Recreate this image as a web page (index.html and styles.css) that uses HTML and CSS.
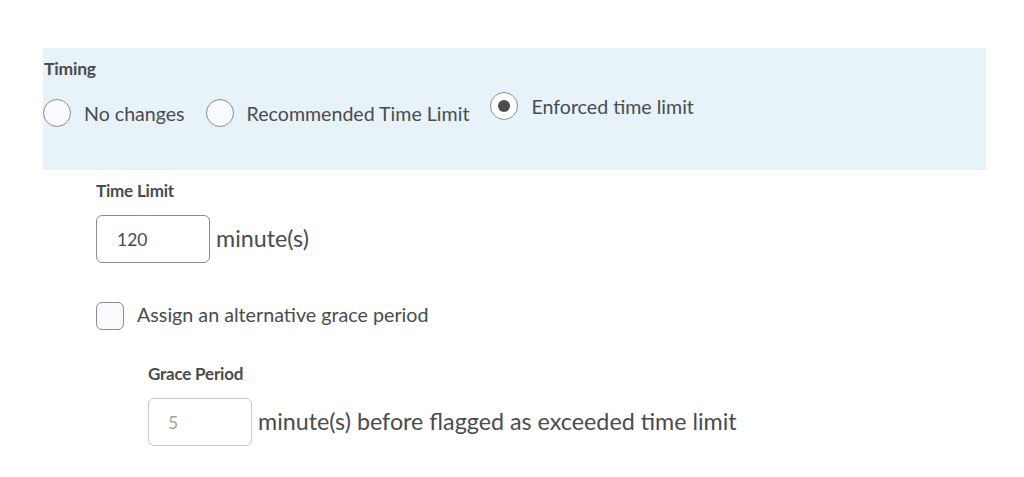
FILE: index.html
```html
<!DOCTYPE html>
<html>
<head>
<meta charset="utf-8">
<link rel="stylesheet" href="styles.css">
</head>
<body>
<div class="page">
  <section class="timing">
    <div class="legend">Timing</div>
    <div class="radios">
      <label class="radio"><span class="circle"></span><span class="rlabel">No changes</span></label>
      <label class="radio"><span class="circle"></span><span class="rlabel">Recommended Time Limit</span></label>
      <label class="radio checked"><span class="circle"><span class="dot"></span></span><span class="rlabel">Enforced time limit</span></label>
    </div>
  </section>
  <section class="limit">
    <div class="field-label">Time Limit</div>
    <div class="input-row">
      <div class="input">120</div>
      <span class="unit">minute(s)</span>
    </div>
    <label class="check"><span class="box"></span><span class="clabel">Assign an alternative grace period</span></label>
    <div class="grace">
      <div class="field-label">Grace Period</div>
      <div class="input-row">
        <div class="input small disabled">5</div>
        <span class="unit">minute(s) before flagged as exceeded time limit</span>
      </div>
    </div>
  </section>
</div>
</body>
</html>
```
FILE: styles.css
```css
* { box-sizing: border-box; }
html, body { margin: 0; background: #fff; }
body { font-family: Lato, "Open Sans", sans-serif; color: #494c4e; }
.page { padding: 48px 38px 0 43px; }
.timing {
  background: #e8f2f9;
  height: 122px;
  padding: 11px 0 0 1px;
}
.legend { font-size: 17.5px; font-weight: 700; line-height: 20px; letter-spacing: -0.2px; }
.radios { display: flex; align-items: flex-start; margin-top: 20px; }
.radio { display: flex; align-items: center; margin-right: 21px; }
.circle {
  width: 28px; height: 28px; border-radius: 50%;
  border: 1.5px solid #8a8c8e; background: #f9fbff;
  display: flex; align-items: center; justify-content: center;
  flex: none;
}
.radio:first-child .circle { margin-left: -1px; }
.rlabel { font-size: 19.6px; margin-left: 13px; }
.radio.checked { margin-top: -7px; }
.radio.checked .circle { background: #fff; }
.dot { width: 12px; height: 12px; border-radius: 50%; background: #494c4e; }
.limit { padding: 11px 0 0 53px; }
.field-label { font-size: 17px; font-weight: 700; line-height: 20px; letter-spacing: -0.2px; }
.input-row { display: flex; align-items: center; margin-top: 14px; }
.input {
  width: 114px; height: 48px; border: 1px solid #8a8c8e; border-radius: 6px;
  font-size: 17.5px; padding-left: 20px; display: flex; align-items: center;
  flex: none;
}
.input.small { width: 104px; padding-left: 19px; }
.input.disabled { border-color: #c9cacb; color: #9ea0a2; }
.unit { font-size: 23.3px; margin-left: 6px; margin-top: -2px; }
.check { display: flex; align-items: center; margin-top: 39px; }
.box {
  width: 28px; height: 28px; border: 1.5px solid #8a8c8e; border-radius: 6px; background: #f9fbff;
  flex: none;
}
.clabel { font-size: 19.7px; margin-left: 13px; margin-top: -3px; }
.grace { padding-left: 52px; margin-top: 34px; }
```
